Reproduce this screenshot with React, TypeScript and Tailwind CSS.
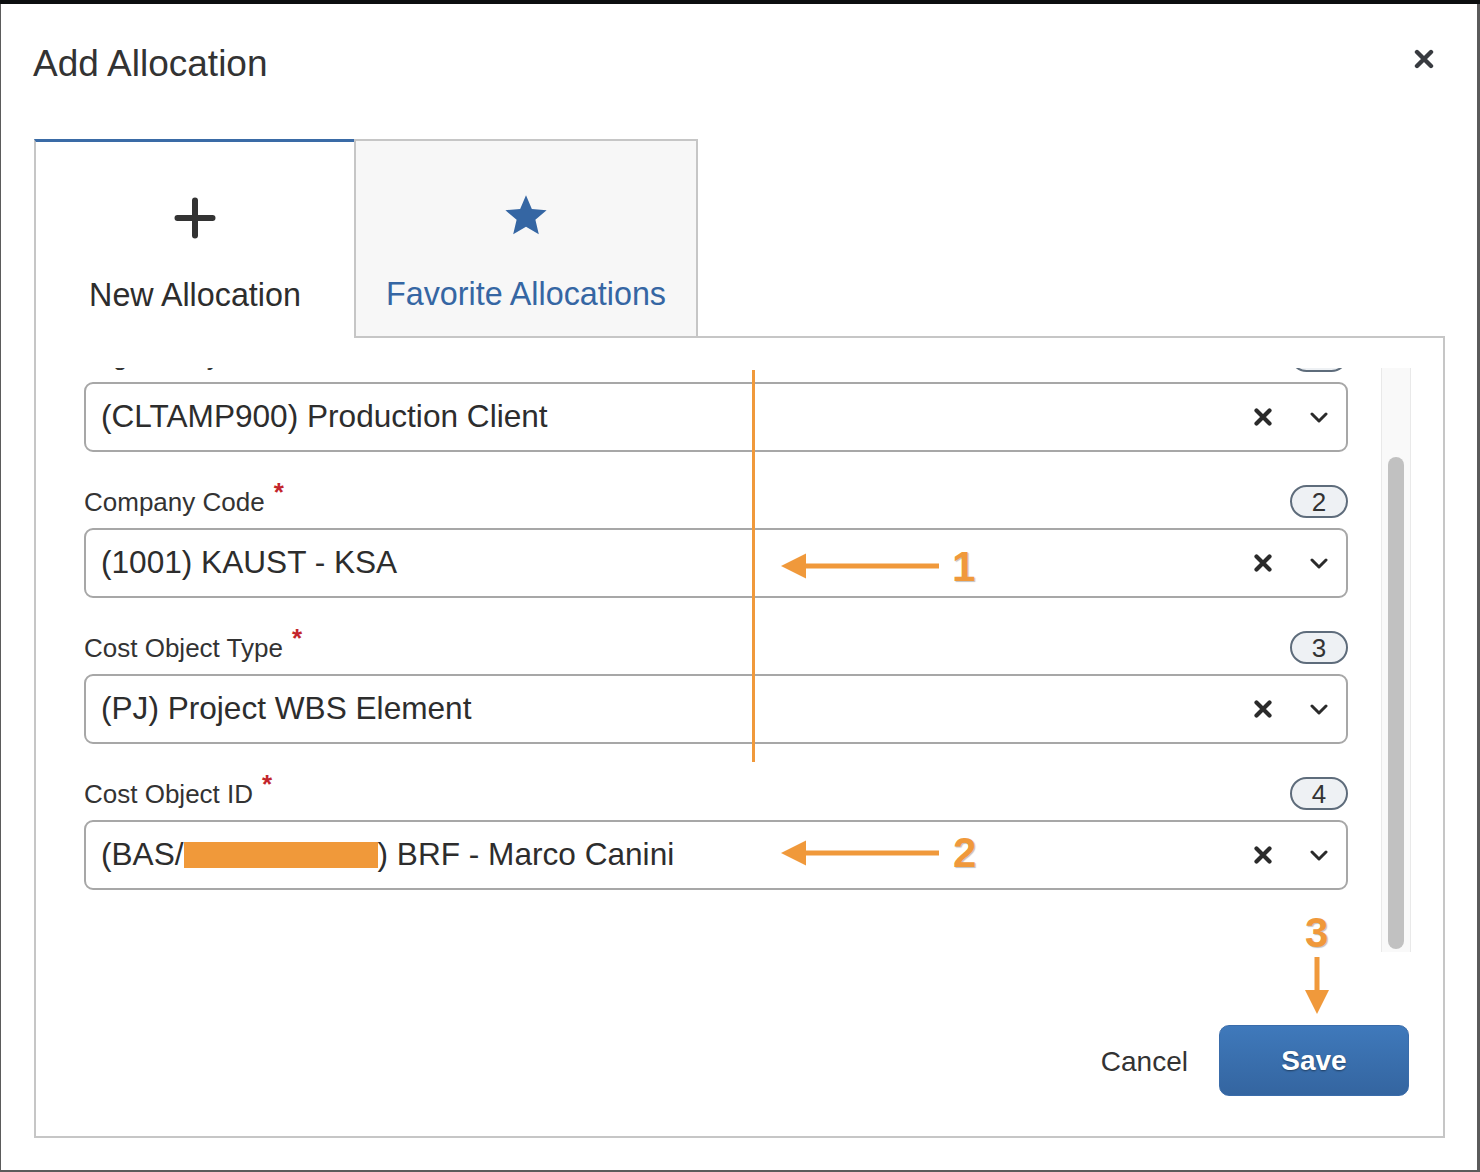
import type { ReactNode } from 'react'

function CloseIcon() {
  return (
    <svg width="20" height="20" viewBox="0 0 20 20" className="mt-[4px]">
      <path d="M3 3L17 17M17 3L3 17" stroke="#383b40" strokeWidth="4.4" strokeLinecap="round" />
    </svg>
  )
}

function ClearIcon() {
  return (
    <svg width="18" height="18" viewBox="0 0 18 18">
      <path d="M2.5 2.5L15.5 15.5M15.5 2.5L2.5 15.5" stroke="#2b2b2b" strokeWidth="4.2" strokeLinecap="round" />
    </svg>
  )
}

function Chevron() {
  return (
    <svg width="18" height="11" viewBox="0 0 18 11" className="ml-[38px]">
      <path d="M2 2l7 7 7-7" fill="none" stroke="#2b2b2b" strokeWidth="3" strokeLinecap="round" strokeLinejoin="round" />
    </svg>
  )
}

function Field({ label, badge, children }: { label: string; badge: string; children: ReactNode }) {
  return (
    <div>
      <div className="mb-[10px] flex h-[33px] items-center justify-between">
        <div className="text-[26px] leading-none text-[#333]">
          {label}
          <span className="relative -top-[10px] ml-[9px] text-[26px] font-bold text-[#c3252c]">*</span>
        </div>
        <div className="flex h-[33px] w-[58px] items-center justify-center rounded-full border-2 border-[#5e6c7b] bg-[#eef1f4] text-[26px] leading-none text-[#333]">
          {badge}
        </div>
      </div>
      <div className="flex h-[70px] items-center rounded-[9px] border-2 border-[#a7a7a7] bg-white pl-[15px] pr-[18px]">
        <div className="flex flex-1 items-center whitespace-nowrap text-[31.6px] leading-none text-[#2d2d2d]">{children}</div>
        <ClearIcon />
        <Chevron />
      </div>
    </div>
  )
}

function LeftArrow({ top }: { top: number }) {
  return (
    <svg width="162" height="28" viewBox="0 0 162 28" className="absolute left-[780px]" style={{ top }}>
      <rect x="18" y="11.5" width="141" height="5" fill="#f0993b" />
      <path d="M1 14L26 1.5V26.5Z" fill="#f0993b" />
    </svg>
  )
}

export default function App() {
  return (
    <div className="relative flex h-[1172px] w-[1480px] flex-col bg-[#5b5b5b] font-['Liberation_Sans',Arial,sans-serif]">
      <div className="h-[4px] bg-[#0c0e0f]" />
      <div className="mb-[2px] ml-px mr-[3px] flex flex-1 flex-col bg-white">
        {/* Header */}
        <div className="flex items-start justify-between pl-[32px] pr-[43px] pt-[41px]">
          <h1 className="text-[37px] leading-none text-[#333]">Add Allocation</h1>
          <CloseIcon />
        </div>

        {/* Tabs */}
        <div className="ml-[33px] mt-[57px] flex items-start">
          <div className="relative z-10 -mb-[2px] flex h-[199px] w-[320px] flex-col items-center border-l-2 border-t-[3px] border-l-[#c6c6c6] border-t-[#3a6ba6] bg-white pt-[55px]">
            <svg width="42" height="42" viewBox="0 0 42 42">
              <path d="M21 3.5V38.5M3.5 21H38.5" stroke="#333" strokeWidth="6" strokeLinecap="round" />
            </svg>
            <div className="mt-[40px] text-[32.3px] leading-none text-[#2d2d2d]">New Allocation</div>
          </div>
          <div className="flex h-[197px] w-[344px] flex-col items-center border-2 border-b-0 border-[#c6c6c6] bg-[#f7f7f7] pt-[52px]">
            <svg width="46" height="46" viewBox="0 0 24 24">
              <path d="M12 1.2l3.05 7.1 7.7.65-5.85 5.05 1.78 7.55L12 17.55 5.32 21.55l1.78-7.55L1.25 8.95l7.7-.65z" fill="#3566a3" />
            </svg>
            <div className="mt-[39px] text-[32.3px] leading-none text-[#3566a3]">Favorite Allocations</div>
          </div>
        </div>

        {/* Panel */}
        <div className="mb-[32px] ml-[33px] mr-[32px] flex flex-1 flex-col border-2 border-[#c6c6c6] pt-[30px]">
          <div className="flex h-[584px] pl-[48px] pr-[32px]">
            <div className="w-[1264px] overflow-hidden">
              <div className="-mt-[29px] flex flex-col gap-[33px]">
                <Field label="Legal Entity" badge="1">(CLTAMP900) Production Client</Field>
                <Field label="Company Code" badge="2">(1001) KAUST - KSA</Field>
                <Field label="Cost Object Type" badge="3">(PJ) Project WBS Element</Field>
                <Field label="Cost Object ID" badge="4">
                  (BAS/<span className="inline-block h-[26px] w-[194px] bg-[#f0993a]" />) BRF - Marco Canini
                </Field>
              </div>
            </div>
            <div className="ml-[33px] flex w-[30px] justify-center border-x border-[#e9e9e9] bg-[#f9f9f9] pt-[89px]">
              <div className="h-[492px] w-[16px] rounded-full bg-[#c1c1c1]" />
            </div>
          </div>

          <div className="mt-[73px] flex items-center justify-end pr-[34px]">
            <button className="mt-[3px] text-[28px] leading-none text-[#333]">Cancel</button>
            <button className="ml-[31px] flex h-[71px] w-[190px] items-center justify-center rounded-[10px] border border-[#3a6caa] bg-gradient-to-b from-[#3f79bb] to-[#3465a0] text-[28px] font-bold leading-none text-white [text-shadow:0_1px_2px_rgba(0,0,0,0.45)]">
              Save
            </button>
          </div>
        </div>
      </div>

      {/* Annotations */}
      <div className="absolute left-[752px] top-[370px] h-[392px] w-[3px] bg-[#f0993b]" />
      <LeftArrow top={552} />
      <LeftArrow top={839} />
      <div className="absolute left-[952px] top-[546px] text-[42px] font-bold leading-none text-[#f0993b] [text-shadow:1px_1px_1px_rgba(0,0,0,0.25)]">1</div>
      <div className="absolute left-[953px] top-[832px] text-[42px] font-bold leading-none text-[#f0993b] [text-shadow:1px_1px_1px_rgba(0,0,0,0.25)]">2</div>
      <div className="absolute left-[1305px] top-[912px] text-[42px] font-bold leading-none text-[#f0993b] [text-shadow:1px_1px_1px_rgba(0,0,0,0.25)]">3</div>
      <svg width="26" height="60" viewBox="0 0 26 60" className="absolute left-[1304px] top-[956px]">
        <rect x="10.5" y="1" width="5" height="38" fill="#f0993b" />
        <path d="M1 34H25L13 58Z" fill="#f0993b" />
      </svg>
    </div>
  )
}
